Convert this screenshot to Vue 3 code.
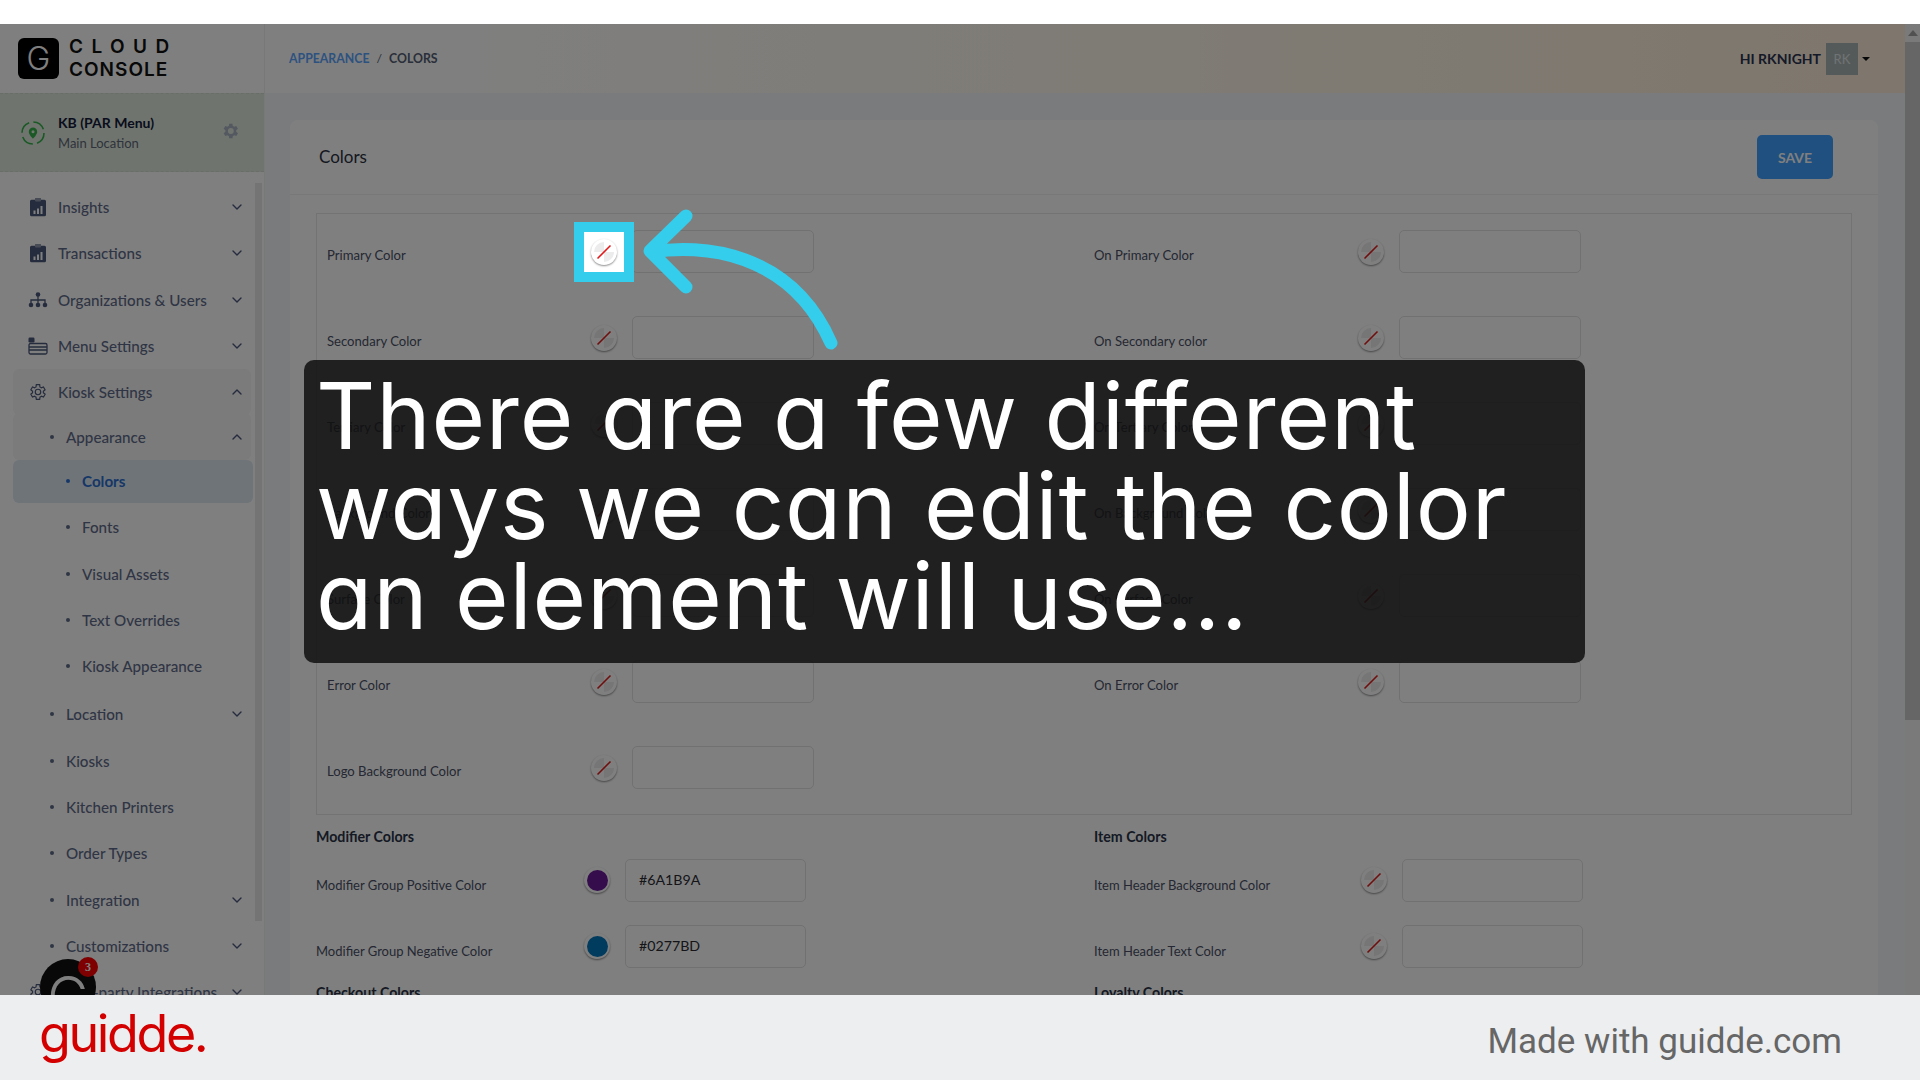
<template>
  <div class="page">
    <div class="top-strip"></div>

    <div class="stage">
      <aside class="sidebar">
        <div class="brand">
          <div class="brand-mark">G</div>
          <div class="brand-name">
            <span class="brand-cloud">CLOUD</span>
            <span class="brand-console">CONSOLE</span>
          </div>
        </div>

        <div class="location">
          <svg class="location-icon" width="26" height="26" viewBox="0 0 26 26">
            <circle cx="13" cy="13" r="11" fill="none" stroke="#35b34a" stroke-width="1.6" stroke-dasharray="13 4.3" />
            <path d="M13 7.5a4.2 4.2 0 0 0-4.2 4.2c0 3 4.2 7 4.2 7s4.2-4 4.2-7A4.2 4.2 0 0 0 13 7.500z" fill="#35b34a" />
            <circle cx="13" cy="11.700" r="1.500" fill="#e3f0df" />
          </svg>
          <div class="location-text">
            <div class="location-name">KB (PAR Menu)</div>
            <div class="location-sub">Main Location</div>
          </div>
          <svg class="location-gear" width="20" height="20" viewBox="0 0 24 24">
            <path d="M19.400 13a7.600 7.600 0 0 0 0-2l2.100-1.600-2-3.500-2.500 1a7.500 7.500 0 0 0-1.700-1L15 3.200h-4l-.4 2.700a7.500 7.500 0 0 0-1.700 1l-2.500-1-2 3.500L6.500 11a7.600 7.600 0 0 0 0 2l-2.100 1.600 2 3.500 2.500-1a7.500 7.500 0 0 0 1.700 1l.4 2.700h4l.4-2.700a7.500 7.500 0 0 0 1.700-1l2.500 1 2-3.500zM13 15.500a3.500 3.500 0 1 1 0-7 3.500 3.500 0 0 1 0 7z" fill="#a9b1c0" />
          </svg>
        </div>

        <nav class="nav">
          <div
            v-for="item in navItems"
            :key="item.label"
            :class="['nav-row', 'nav-row--' + item.level, { 'nav-row--open': item.open, 'nav-row--active': item.active, 'nav-row--tight': item.tight, 'nav-row--gap': item.gap }]"
          >
            <span v-if="item.icon" class="nav-icon">
              <svg v-if="item.icon === 'chart'" width="18" height="20" viewBox="0 0 18 20">
                <path d="M6 1.500h6v1.200h3.500A1.500 1.500 0 0 1 17 4.200v13.600a1.500 1.500 0 0 1-1.500 1.500h-13A1.500 1.500 0 0 1 1 17.800V4.200a1.500 1.500 0 0 1 1.500-1.500H6z" fill="#4b587a" />
                <rect x="6" y="1" width="6" height="3.500" rx="1" fill="#8d97ad" />
                <path d="M4.500 13.500h2v3.500h-2zM8 11.500h2v5.500H8zM11.500 9h2v8h-2z" fill="#fff" />
              </svg>
              <svg v-else-if="item.icon === 'tree'" width="20" height="16" viewBox="0 0 20 16">
                <circle cx="10" cy="2.500" r="2.300" fill="#4b587a" />
                <path d="M10 4v4M3 11V8h14v3M10 8v3" fill="none" stroke="#4b587a" stroke-width="1.300" />
                <circle cx="3" cy="13" r="2.300" fill="#4b587a" />
                <circle cx="10" cy="13" r="2.300" fill="#4b587a" />
                <circle cx="17" cy="13" r="2.300" fill="#4b587a" />
              </svg>
              <svg v-else-if="item.icon === 'menu'" width="20" height="18" viewBox="0 0 20 18">
                <rect x="0.500" y="0.500" width="6" height="5" rx="1.200" fill="#4b587a" />
                <rect x="1" y="6.500" width="18" height="10.500" rx="1.500" fill="none" stroke="#4b587a" stroke-width="1.300" />
                <path d="M1 10h18M1 13h18" stroke="#4b587a" stroke-width="1.500" />
              </svg>
              <svg v-else width="20" height="20" viewBox="0 0 24 24">
                <path d="M19.400 13a7.600 7.600 0 0 0 0-2l2.100-1.600-2-3.500-2.500 1a7.500 7.500 0 0 0-1.700-1L15 3.200h-4l-.4 2.700a7.500 7.500 0 0 0-1.700 1l-2.500-1-2 3.500L6.500 11a7.600 7.600 0 0 0 0 2l-2.100 1.600 2 3.500 2.500-1a7.500 7.500 0 0 0 1.700 1l.4 2.700h4l.4-2.700a7.500 7.500 0 0 0 1.700-1l2.500 1 2-3.500z" transform="translate(-1 0)" fill="none" stroke="#4b587a" stroke-width="1.400" />
                <circle cx="12" cy="12" r="3.300" fill="none" stroke="#4b587a" stroke-width="1.400" />
              </svg>
            </span>
            <span v-else class="nav-dot"></span>
            <span class="nav-label">{{ item.label }}</span>
            <svg v-if="item.chevron" class="nav-chevron" width="10" height="6" viewBox="0 0 10 6">
              <path :d="item.open ? 'M1 5l4-4 4 4' : 'M1 1l4 4 4-4'" fill="none" stroke="#4b587a" stroke-width="1.400" stroke-linecap="round" stroke-linejoin="round" />
            </svg>
          </div>
        </nav>

        <div class="side-scroll"></div>

        <div class="bubble">
          <span class="bubble-g">G</span>
          <span class="bubble-count">3</span>
        </div>
      </aside>

      <main class="main">
        <header class="topbar">
          <div class="crumbs">
            <span class="crumb-link">APPEARANCE</span>
            <span class="crumb-sep">/</span>
            <span>COLORS</span>
          </div>
          <div class="user">
            <span>HI RKNIGHT</span>
            <span class="avatar">RK</span>
            <span class="caret"></span>
          </div>
        </header>

        <div class="content">
          <section class="card">
            <div class="card-head">
              <span class="card-title">Colors</span>
              <button type="button" class="save">SAVE</button>
            </div>

            <div class="card-body">
              <div class="color-box">
                <div v-for="row in colorRows" :key="row[0]" class="color-row">
                  <div v-for="name in row" :key="name" class="color-cell">
                    <template v-if="name">
                      <span class="color-label">{{ name }}</span>
                      <span class="swatch swatch--none">
                        <svg width="26" height="26" viewBox="0 0 26 26">
                          <path d="M13 3a10 10 0 0 0-10 10h10zM13 13v10a10 10 0 0 0 10-10z" fill="#ececec" />
                          <path d="M6.500 19.500L19.500 6.500" stroke="#e01b1b" stroke-width="1.600" />
                        </svg>
                      </span>
                      <span class="color-input"></span>
                    </template>
                  </div>
                </div>
              </div>

              <div class="groups">
                <div v-for="group in groups" :key="group.title" class="group">
                  <h4 class="group-title">{{ group.title }}</h4>
                  <div v-for="field in group.fields" :key="field.label" class="group-row">
                    <span class="group-label">{{ field.label }}</span>
                    <span v-if="field.color" class="swatch swatch--color">
                      <i :style="{ background: field.color }"></i>
                    </span>
                    <span v-else class="swatch swatch--none">
                      <svg width="26" height="26" viewBox="0 0 26 26">
                        <path d="M13 3a10 10 0 0 0-10 10h10zM13 13v10a10 10 0 0 0 10-10z" fill="#ececec" />
                        <path d="M6.500 19.500L19.500 6.500" stroke="#e01b1b" stroke-width="1.600" />
                      </svg>
                    </span>
                    <span class="group-input">{{ field.color }}</span>
                  </div>
                </div>
                <h4 class="group-title group-title--next">Checkout Colors</h4>
                <h4 class="group-title group-title--next">Loyalty Colors</h4>
              </div>
            </div>
          </section>
        </div>
      </main>

      <div class="page-scroll">
        <span class="page-scroll-up"></span>
        <span class="page-scroll-thumb"></span>
      </div>
    </div>

    <footer class="footer">
      <span class="footer-logo">guidde.</span>
      <span class="footer-note">Made with guidde.com</span>
    </footer>

    <div class="dim"></div>

    <div class="spot">
      <span class="swatch swatch--none">
        <svg width="26" height="26" viewBox="0 0 26 26">
          <path d="M13 3a10 10 0 0 0-10 10h10zM13 13v10a10 10 0 0 0 10-10z" fill="#ececec" />
          <path d="M6.500 19.500L19.500 6.500" stroke="#e01b1b" stroke-width="1.600" />
        </svg>
      </span>
    </div>

    <svg class="arrow" width="240" height="170" viewBox="630 200 240 170">
      <path d="M686 216L650 251L686 287M652 252C700 244 790 250 831 343" fill="none" stroke="#35cdec" stroke-width="13" stroke-linecap="round" stroke-linejoin="round" />
    </svg>

    <div class="caption">There are a few different<br />ways we can edit the color<br />an element will use...</div>
  </div>
</template>

<script setup>
const navItems = [
  { label: 'Insights', level: 'top', icon: 'chart', chevron: true },
  { label: 'Transactions', level: 'top', icon: 'chart', chevron: true },
  { label: 'Organizations & Users', level: 'top', icon: 'tree', chevron: true },
  { label: 'Menu Settings', level: 'top', icon: 'menu', chevron: true },
  { label: 'Kiosk Settings', level: 'top', icon: 'gear', chevron: true, open: true },
  { label: 'Appearance', level: 'sub', chevron: true, open: true, tight: true },
  { label: 'Colors', level: 'leaf', active: true, tight: true },
  { label: 'Fonts', level: 'leaf' },
  { label: 'Visual Assets', level: 'leaf' },
  { label: 'Text Overrides', level: 'leaf' },
  { label: 'Kiosk Appearance', level: 'leaf' },
  { label: 'Location', level: 'sub', chevron: true, gap: true },
  { label: 'Kiosks', level: 'sub' },
  { label: 'Kitchen Printers', level: 'sub' },
  { label: 'Order Types', level: 'sub' },
  { label: 'Integration', level: 'sub', chevron: true },
  { label: 'Customizations', level: 'sub', chevron: true },
  { label: 'Third-party Integrations', level: 'top', icon: 'gear', chevron: true },
]

const colorRows = [
  ['Primary Color', 'On Primary Color'],
  ['Secondary Color', 'On Secondary color'],
  ['Tertiary Color', 'On Tertiary Color'],
  ['Background Color', 'On Background Color'],
  ['Surface Color', 'On Surface Color'],
  ['Error Color', 'On Error Color'],
  ['Logo Background Color', ''],
]

const groups = [
  {
    title: 'Modifier Colors',
    fields: [
      { label: 'Modifier Group Positive Color', color: '#6A1B9A' },
      { label: 'Modifier Group Negative Color', color: '#0277BD' },
    ],
  },
  {
    title: 'Item Colors',
    fields: [
      { label: 'Item Header Background Color', color: '' },
      { label: 'Item Header Text Color', color: '' },
    ],
  },
]
</script>

<style>
html,
body {
  margin: 0;
  background: #fff;
  overflow: hidden;
}
</style>

<style scoped>
.page {
  position: relative;
  width: 1920px;
  height: 1080px;
  overflow: hidden;
  display: flex;
  flex-direction: column;
  font-family: Lato, "Liberation Sans", sans-serif;
  color: #3e4660;
}

.top-strip {
  height: 24px;
  flex: none;
  background: #fff;
}

.stage {
  height: 971px;
  flex: none;
  display: flex;
  overflow: hidden;
}

.sidebar {
  position: relative;
  width: 265px;
  flex: none;
  background: #fff;
  border-right: 1px solid #f0f0f2;
  box-sizing: border-box;
}

.brand {
  height: 69px;
  display: flex;
  align-items: center;
  gap: 10px;
  padding-left: 18px;
  box-sizing: border-box;
}

.brand-mark {
  width: 41px;
  height: 41px;
  border-radius: 6px;
  background: #000;
  color: #fff;
  display: flex;
  align-items: center;
  justify-content: center;
  font: 300 32px Inter, sans-serif;
}

.brand-name {
  display: flex;
  flex-direction: column;
  font-family: Inter, sans-serif;
  font-weight: 600;
  font-size: 19px;
  line-height: 22.500px;
  color: #111;
}

.brand-cloud {
  letter-spacing: 8.400px;
}

.brand-console {
  letter-spacing: 1px;
}

.location {
  height: 79px;
  box-sizing: border-box;
  display: flex;
  align-items: center;
  padding: 0 24px 0 20px;
  background: #dfe9dc;
  border-top: 1px dashed #d5dcd3;
  border-bottom: 1px dashed #d5dcd3;
}

.location-text {
  margin-left: 12px;
  flex: 1;
}

.location-name {
  font-size: 14px;
  line-height: 20px;
  font-weight: 700;
  color: #141a3a;
}

.location-sub {
  font-size: 13px;
  line-height: 20px;
  color: #5e6678;
}

.location-gear {
  margin-top: -3px;
}

.nav {
  padding: 12px 13px 0;
}

.nav-row {
  height: 46.300px;
  display: flex;
  align-items: center;
  font-size: 15.200px;
  font-weight: 500;
  color: #5f6b8a;
  box-sizing: border-box;
  border-radius: 6px;
  background-clip: content-box;
  padding: 2px 0;
}

.nav-row--tight {
  margin-top: -2px;
}

.nav-row--gap {
  margin-top: 2px;
}

.nav-row--top {
  padding-left: 12px;
}

.nav-row--sub {
  padding-left: 37px;
}

.nav-row--leaf {
  padding-left: 53px;
}

.nav-row--open {
  background: #f6f6f6;
  background-clip: content-box;
}

.nav-row--top.nav-row--open,
.nav-row--sub.nav-row--open {
  background: linear-gradient(#f6f6f6, #f6f6f6) 0 0 / 240px 100% no-repeat;
  margin-left: 0;
}

.nav-row--active {
  position: relative;
  color: #2b6fd0;
  font-weight: 700;
}

.nav-row--active::before {
  content: "";
  position: absolute;
  left: 0;
  top: 2px;
  bottom: 1px;
  width: 240px;
  border-radius: 6px;
  background: #dfe8f0;
  z-index: 0;
}

.nav-row--active > * {
  position: relative;
}

.nav-icon {
  width: 26px;
  height: 22px;
  display: flex;
  align-items: center;
  justify-content: center;
  margin-right: 7px;
}

.nav-dot {
  width: 4px;
  height: 4px;
  border-radius: 50%;
  background: currentColor;
  margin-right: 12px;
}

.nav-label {
  flex: 1;
  white-space: nowrap;
}

.nav-chevron {
  margin-right: 9px;
}

.side-scroll {
  position: absolute;
  right: 2px;
  top: 159px;
  width: 7px;
  height: 738px;
  background: #e8e8e8;
}

.bubble {
  position: absolute;
  left: 40px;
  top: 935px;
  width: 56px;
  height: 56px;
  border-radius: 50%;
  background: #111;
  color: #fff;
  display: flex;
  align-items: center;
  justify-content: center;
}

.bubble-g {
  font: 300 56px Inter, sans-serif;
  line-height: 56px;
  margin-top: 20px;
}

.bubble-count {
  position: absolute;
  right: -2px;
  top: -2px;
  width: 20px;
  height: 20px;
  border-radius: 50%;
  background: #ff0000;
  font: 700 12px "Liberation Serif", serif;
  line-height: 20px;
  text-align: center;
}

.main {
  flex: 1;
  min-width: 0;
  background: #f5f7fa;
}

.topbar {
  height: 69px;
  display: flex;
  align-items: center;
  justify-content: space-between;
  padding: 0 35px 0 24px;
  background: linear-gradient(90deg, #fff 0%, #fff 10%, #fff5e4 70%, #ffeedb 100%);
}

.crumbs {
  display: flex;
  gap: 7px;
  font-size: 12.300px;
  font-weight: 700;
  color: #555e74;
}

.crumb-link {
  color: #5aa4ff;
}

.crumb-sep {
  font-weight: 400;
}

.user {
  display: flex;
  align-items: center;
  font-size: 14px;
  font-weight: 700;
  color: #2b3350;
}

.avatar {
  width: 32px;
  height: 32px;
  margin-left: 5px;
  display: flex;
  align-items: center;
  justify-content: center;
  background: #a9b5b5;
  color: #e0e6e6;
  font-size: 13px;
  font-weight: 400;
}

.caret {
  margin-left: 4px;
  border-left: 4px solid transparent;
  border-right: 4px solid transparent;
  border-top: 4px solid #111;
}

.content {
  padding: 27px 27px 0 25px;
}

.card {
  background: #fff;
  border-radius: 8px 8px 0 0;
  height: 900px;
}

.card-head {
  height: 75px;
  box-sizing: border-box;
  display: flex;
  align-items: center;
  justify-content: space-between;
  padding: 0 45px 0 29px;
  border-bottom: 1px solid #f1f1f3;
}

.card-title {
  font-size: 17px;
  color: #2a3040;
  margin-top: -2px;
}

.save {
  width: 76px;
  height: 44px;
  border: 0;
  border-radius: 5px;
  background: #3ea0ff;
  color: #fff;
  font: 700 14px Lato, sans-serif;
}

.card-body {
  padding: 18px 26px 0;
}

.color-box {
  border: 1px solid #e6e6e6;
  height: 602px;
  box-sizing: border-box;
  padding: 16px 10px 0;
}

.color-row {
  height: 86px;
  display: grid;
  grid-template-columns: 767px 1fr;
}

.color-cell {
  display: flex;
  align-items: flex-start;
}

.color-label {
  width: 264px;
  font-size: 13.100px;
  line-height: 18px;
  margin-top: 16px;
  color: #4a5066;
  white-space: nowrap;
}

.swatch {
  position: relative;
  width: 26px;
  height: 26px;
  flex: none;
  border-radius: 50%;
  background: #fff;
  box-shadow: 0 1px 2px rgba(0, 0, 0, 0.45);
  margin-top: 9px;
}

.swatch svg {
  display: block;
}

.swatch--color {
  display: flex;
  align-items: center;
  justify-content: center;
}

.swatch--color i {
  width: 21px;
  height: 21px;
  border-radius: 50%;
}

.color-input {
  width: 182px;
  height: 43px;
  box-sizing: border-box;
  margin-left: 15px;
  border: 1px solid #e2e2e4;
  border-radius: 5px;
}

.groups {
  display: grid;
  grid-template-columns: 778px 1fr;
}

.group-title {
  margin: 0;
  font-size: 14.200px;
  line-height: 20px;
  font-weight: 700;
  color: #2a3348;
}

.group {
  padding-top: 12px;
}

.group-title--next {
  margin-top: 4px;
}

.group-row {
  height: 66px;
  display: flex;
  align-items: flex-start;
  padding-top: 12px;
  box-sizing: border-box;
  margin-bottom: 0;
}

.group-label {
  font-size: 13px;
  line-height: 18px;
  margin-top: 17px;
  width: 268px;
  color: #4a5066;
  white-space: nowrap;
}

.group + .group .group-label {
  width: 267px;
}

.group-row .swatch {
  margin-top: 8px;
}

.group-input {
  width: 181px;
  height: 43px;
  margin-left: 15px;
  box-sizing: border-box;
  border: 1px solid #e2e2e4;
  border-radius: 5px;
  padding: 0 13px;
  font-size: 14.200px;
  line-height: 40px;
  color: #2b2b33;
}

.page-scroll {
  position: relative;
  width: 15px;
  flex: none;
  background: #f4f4f6;
  display: flex;
  flex-direction: column;
  align-items: center;
}

.page-scroll-up {
  margin-top: 6px;
  border-left: 5px solid transparent;
  border-right: 5px solid transparent;
  border-bottom: 6px solid #a3a3a3;
}

.page-scroll-thumb {
  width: 100%;
  height: 678px;
  margin-top: 6px;
  background: #cdcdcd;
}

.footer {
  height: 85px;
  flex: none;
  display: flex;
  align-items: center;
  justify-content: space-between;
  padding: 0 78px 0 39px;
  background: #edeef0;
  position: relative;
  z-index: 3;
}

.footer-logo {
  font: 400 52px Inter, sans-serif;
  font-feature-settings: "cv11";
  color: #d40000;
  letter-spacing: -2.400px;
  margin-top: -9px;
}

.footer-note {
  font: 400 35px Roboto, sans-serif;
  color: #666;
  margin-top: 7px;
}

.dim {
  position: absolute;
  left: 0;
  right: 0;
  top: 24px;
  height: 971px;
  background: rgba(0, 0, 0, 0.5);
  z-index: 1;
}

.spot {
  position: absolute;
  left: 574px;
  top: 222px;
  width: 60px;
  height: 60px;
  box-sizing: border-box;
  border: 10px solid #35cdec;
  background: #fff;
  display: flex;
  align-items: center;
  justify-content: center;
  z-index: 2;
}

.spot .swatch {
  margin-top: 0;
}

.arrow {
  position: absolute;
  left: 630px;
  top: 200px;
  z-index: 2;
}

.caption {
  position: absolute;
  left: 304px;
  top: 360px;
  width: 1281px;
  height: 303px;
  box-sizing: border-box;
  padding: 11px 12px;
  border-radius: 10px;
  background: rgba(15, 15, 15, 0.85);
  color: #fff;
  font-family: Inter, sans-serif;
  font-feature-settings: "cv11";
  font-size: 92px;
  line-height: 90px;
  letter-spacing: 0.800px;
  white-space: nowrap;
  z-index: 2;
}
</style>
